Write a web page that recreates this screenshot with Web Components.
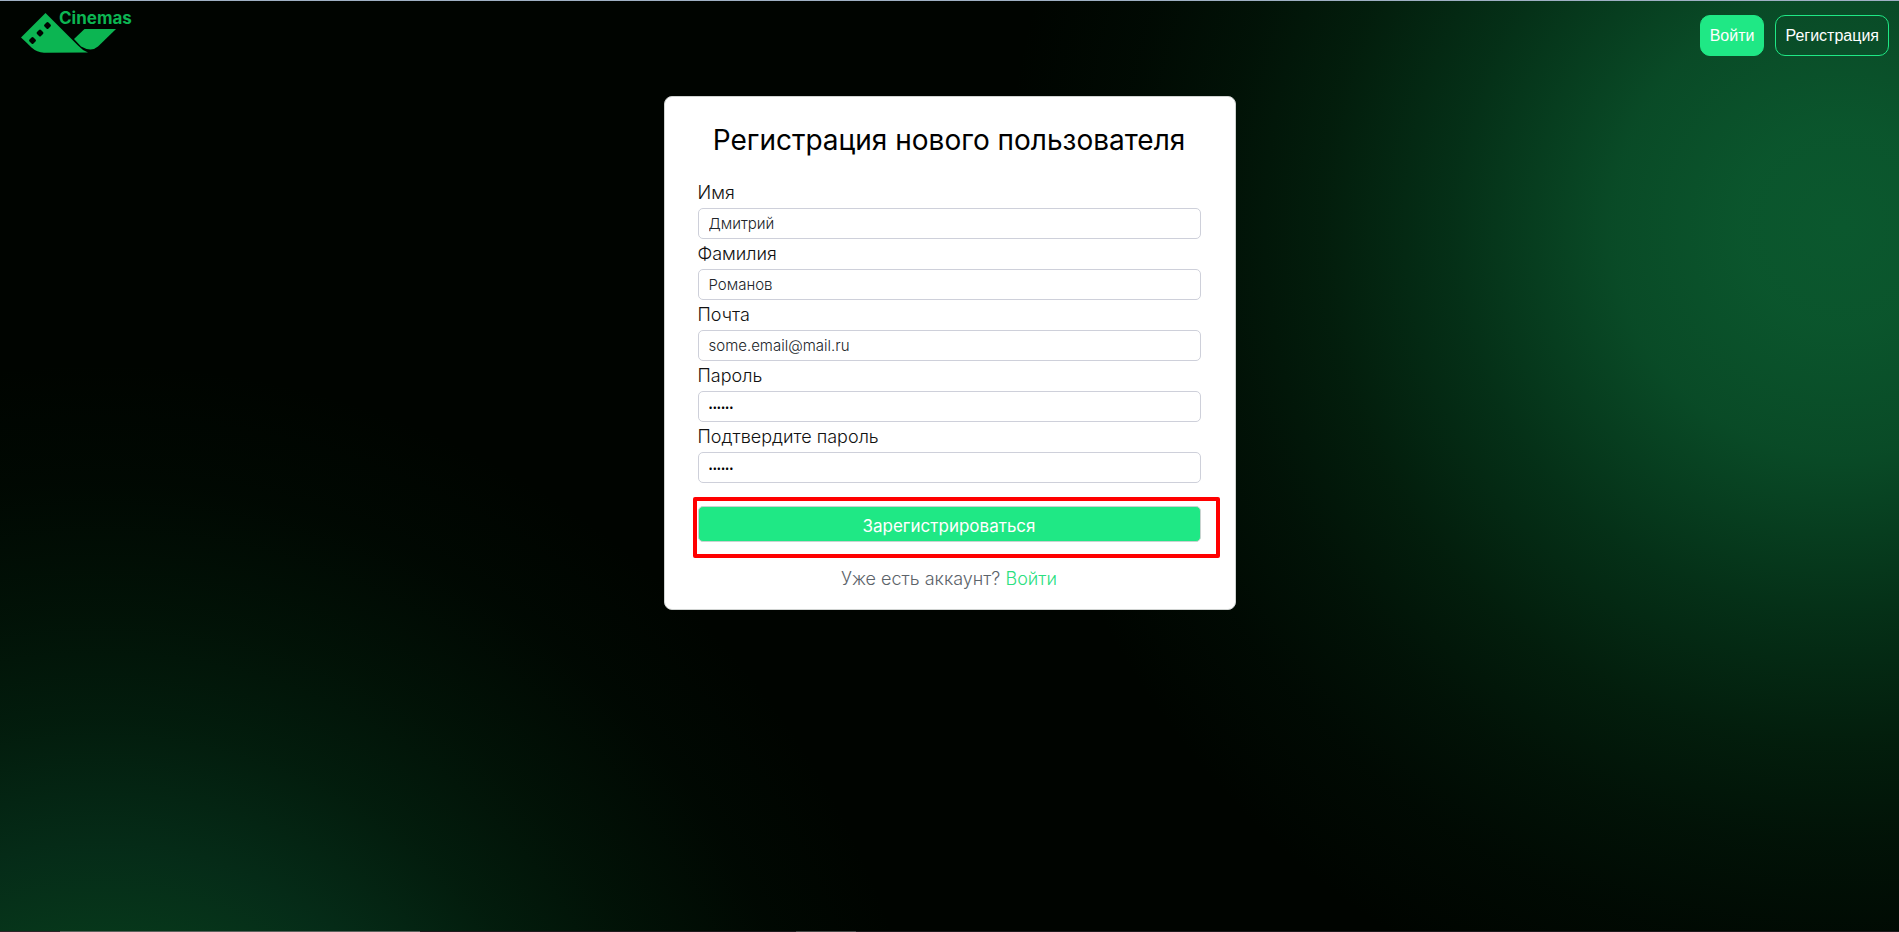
<!DOCTYPE html>
<html lang="ru">
<head>
<meta charset="utf-8">
<title>Cinemas — регистрация</title>
<style>
html, body { height: 100%; }
body { margin: 0; background: #000400; font-family: "Inter", "Open Sans", sans-serif; font-size: 16px; color: #212529; }
</style>
</head>
<body>
<cinema-page>
  <cinema-header slot="header">
    <cinema-logo></cinema-logo>
    <header-button slot="actions" variant="solid">Войти</header-button>
    <header-button slot="actions">Регистрация</header-button>
  </cinema-header>
  <register-card heading="Регистрация нового пользователя">
    <form-field label="Имя" value="Дмитрий"></form-field>
    <form-field label="Фамилия" value="Романов"></form-field>
    <form-field label="Почта" type="email" value="some.email@mail.ru"></form-field>
    <form-field label="Пароль" type="password" value="123456"></form-field>
    <form-field label="Подтвердите пароль" type="password" value="123456"></form-field>
    <submit-button slot="submit">Зарегистрироваться</submit-button>
    <login-hint slot="hint">Уже есть аккаунт?</login-hint>
  </register-card>
</cinema-page>
<script>
const define = (name, markup, setup) => {
  const template = document.createElement('template');
  template.innerHTML = markup;
  customElements.define(name, class extends HTMLElement {
    constructor() {
      super();
      this.attachShadow({ mode: 'open' }).append(template.content.cloneNode(true));
    }
    connectedCallback() { if (setup) setup(this, this.shadowRoot); }
  });
};

define('cinema-page', `
<style>
:host {
  display: flex; flex-direction: column; min-height: 100vh; box-sizing: border-box;
  border-top: 1px solid #9fb0c4;
  background:
    radial-gradient(circle at 97% 225px, rgba(11,88,46,1) 0, rgba(11,88,46,.97) 100px, rgba(11,88,46,.84) 230px, rgba(9,88,44,.52) 390px, rgba(9,88,40,.3) 520px, rgba(9,88,40,.17) 620px, rgba(9,88,40,.07) 720px, rgba(9,88,40,0) 840px),
    radial-gradient(circle at 100px calc(100% + 270px), rgba(11,88,46,.7) 200px, rgba(11,88,44,.6) 270px, rgba(11,88,50,.48) 350px, rgba(9,88,44,.29) 480px, rgba(9,88,40,.17) 590px, rgba(9,88,40,.05) 720px, rgba(9,88,40,0) 840px),
    #000400;
}
main { flex: 1; display: flex; justify-content: center; align-items: flex-start; padding: 40px 16px 16px; }
footer { height: 1px; background: linear-gradient(90deg, #2b2528 60px, #5a615d 60px, #5a615d 420px, #1f1a1e 420px, #1f1a1e 796px, #484848 796px, #484848 856px, #1f1a1e 856px); }
</style>
<slot name="header"></slot>
<main><slot></slot></main>
<footer></footer>`);

define('cinema-header', `
<style>
:host { display: block; }
header { display: flex; justify-content: space-between; align-items: flex-start; padding: 0 10px 0 20px; height: 55px; }
nav { display: flex; gap: 11px; padding-top: 14px; }
</style>
<header><slot></slot><nav><slot name="actions"></slot></nav></header>`);

define('cinema-logo', `
<style>
:host { display: block; }
a { display: block; }
svg { display: block; }
text { font: 700 17px "Inter", sans-serif; }
</style>
<a href="#" aria-label="Cinemas">
<svg width="116" height="55" viewBox="20 1 116 55" fill="#0cb552">
  <path fill-rule="evenodd" d="M45.500 13 L78 45.500 Q82 50 88 52.500 L44 52.800 Q37 52.500 31.500 47.500 Q27 43 21 37.500 Z
    M46.500 22.500 q1 -1 2 0 l2 2 q1 1 0 2 l-2 2 q-1 1 -2 0 l-2 -2 q-1 -1 0 -2 Z
    M39 30 q1 -1 2 0 l2 2 q1 1 0 2 l-2 2 q-1 1 -2 0 l-2 -2 q-1 -1 0 -2 Z
    M31.500 37.500 q1 -1 2 0 l2 2 q1 1 0 2 l-2 2 q-1 1 -2 0 l-2 -2 q-1 -1 0 -2 Z"/>
  <path d="M84.500 29 H116 L98 46.500 Q94.500 49.500 90.500 49.500 Q85 49 81 46.500 L74 39 Z"/>
  <text x="59" y="24">Cinemas</text>
</svg></a>`);

define('header-button', `
<style>
:host { display: block; }
button {
  display: block; height: 41px; padding: 0 9px; border: 1px solid #1fe885; border-radius: 10px;
  background: transparent; color: #fff; font: 16px/20px "Liberation Sans", Arial, sans-serif; cursor: pointer;
}
:host([variant="solid"]) button { background: #1fe885; }
</style>
<button type="button"><slot></slot></button>`);

define('register-card', `
<style>
:host { display: block; width: 100%; max-width: 572px; }
section { box-sizing: border-box; background: #fff; border: 1px solid #d0d3d1; border-radius: 8px; padding: 25px 34px 18px 33px; }
h1 { margin: 0 0 20px; font-size: 28px; line-height: 36px; font-weight: 400; text-align: center; color: #000; white-space: nowrap; }
</style>
<section>
  <h1></h1>
  <form><slot></slot><slot name="submit"></slot></form>
  <slot name="hint"></slot>
</section>`, (host, root) => {
  root.querySelector('h1').textContent = host.getAttribute('heading');
});

define('form-field', `
<style>
:host { display: block; }
label { display: block; padding: 3px 0; line-height: 24px; font-size: 18px; font-weight: 300; color: #111; }
input {
  display: block; box-sizing: border-box; width: 100%; height: 31px; margin: 0; padding: 0 10px;
  border: 1px solid #ced0da; border-radius: 5px; background: #fff; color: #212529;
  font-family: inherit; font-size: 15px; font-weight: 300; outline: none;
}
input[type="password"] { padding-top: 2px; font-family: "Open Sans", sans-serif; font-size: 11px; font-weight: 400; color: #000; }
</style>
<label for="control"></label>
<input id="control">`, (host, root) => {
  root.querySelector('label').textContent = host.getAttribute('label');
  const input = root.querySelector('input');
  input.type = host.getAttribute('type') || 'text';
  input.value = host.getAttribute('value') || '';
});

define('submit-button', `
<style>
:host { display: block; position: relative; margin-top: 23px; }
button {
  display: block; width: 100%; height: 36px; border: 1px solid #c9d3d0; border-radius: 5px; padding: 3px 0 0;
  background: #1fe885; color: #fff; font-family: inherit; font-size: 17px; font-weight: 400; cursor: pointer;
}
.frame { position: absolute; inset: -9px -19px -16px -5px; border: 4px solid #f00; border-radius: 2px; pointer-events: none; }
</style>
<button type="submit"><slot></slot></button>
<div class="frame"></div>`);

define('login-hint', `
<style>
:host { display: block; margin-top: 25px; text-align: center; font-size: 18px; line-height: 24px; font-weight: 300; color: #5c636a; }
a { color: #2be07f; text-decoration: none; }
</style>
<slot></slot> <a href="#">Войти</a>`);
</script>
</body>
</html>
